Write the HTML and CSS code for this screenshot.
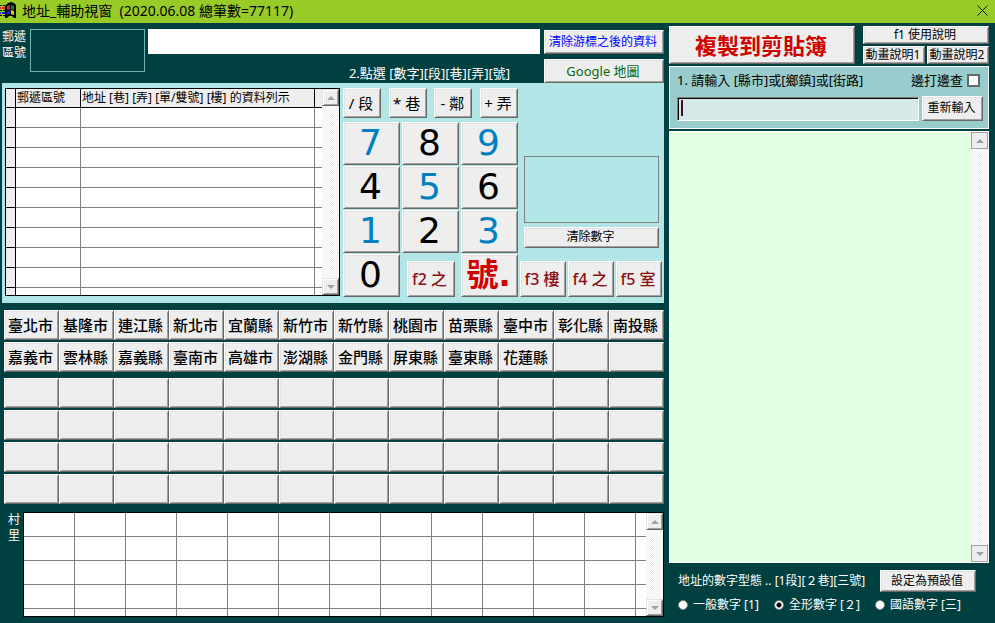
FILE: index.html
```html
<!DOCTYPE html>
<html lang="zh-Hant">
<head>
<meta charset="utf-8">
<title>地址_輔助視窗</title>
<link rel="stylesheet" href="styles.css">
</head>
<body>
<header class="titlebar">
  <svg class="app-icon" viewBox="0 0 17 17" width="17" height="17" aria-hidden="true">
    <path d="M0 3h2v1H0zM3 3h2v1H3zM0 8h2v1H0zM3 8h3v1H3zM0 13h2v1H0zM3 13h3v1H3z" fill="#000"/>
    <path d="M0 5h1v2H0zM2 5h3v2H2z" fill="#e02020"/>
    <path d="M0 10h1v2H0zM2 10h3v2H2z" fill="#1020d0"/>
    <path d="M6 3l2-2 3-1 3 1 2 2v13h-2l-2-2H9l-2 2H5V4z" fill="#000"/>
    <path d="M7 4l3-1v4L7 8z" fill="#e02020"/>
    <path d="M11 3l3 1v4l-3-1z" fill="#108030"/>
    <path d="M7 9l3-1v4l-3 1z" fill="#1020d0"/>
    <path d="M11 8l3 1v4l-3-1z" fill="#d8d020"/>
  </svg>
  <h1 class="title">地址_輔助視窗&nbsp; (2020.06.08 總筆數=77117)</h1>
  <button class="close" aria-label="關閉"><svg viewBox="0 0 11 11" width="11" height="11"><path d="M.5.5l10 10M10.500.5l-10 10" stroke="#111" fill="none"/></svg></button>
</header>
<main class="layout">
  <div class="left">
    <section class="top">
      <label class="zip-label" for="zip">郵遞<br>區號</label>
      <input class="zip" id="zip">
      <div class="address-col">
        <input class="address" aria-label="地址">
        <p class="hint">2.點選 [數字][段][巷][弄][號]</p>
      </div>
      <div class="top-buttons">
        <button class="btn blue">清除游標之後的資料</button>
        <button class="btn green">Google 地圖</button>
      </div>
    </section>
    <section class="panel">
      <div class="grid-box">
        <div class="clip">
        <table class="list">
          <colgroup><col class="c-mark"><col class="c-zip"><col><col class="c-end"></colgroup>
          <thead><tr><th></th><th>郵遞區號</th><th>地址 [巷] [弄] [單/雙號] [樓] 的資料列示</th><th></th></tr></thead>
          <tbody>
            <tr><td></td><td></td><td></td><td></td></tr><tr><td></td><td></td><td></td><td></td></tr>
            <tr><td></td><td></td><td></td><td></td></tr><tr><td></td><td></td><td></td><td></td></tr>
            <tr><td></td><td></td><td></td><td></td></tr><tr><td></td><td></td><td></td><td></td></tr>
            <tr><td></td><td></td><td></td><td></td></tr><tr><td></td><td></td><td></td><td></td></tr>
            <tr><td></td><td></td><td></td><td></td></tr><tr><td></td><td></td><td></td><td></td></tr>
          </tbody>
        </table>
        </div>
        <div class="scroll"><button class="arrow up" aria-label="上"></button><button class="arrow down" aria-label="下"></button></div>
      </div>
      <div class="keypad">
        <div class="ops"><button class="btn">/ 段</button><button class="btn">* 巷</button><button class="btn">- 鄰</button><button class="btn">+ 弄</button></div>
        <div class="keys">
          <button class="btn alt">7</button><button class="btn">8</button><button class="btn alt">9</button>
          <button class="btn">4</button><button class="btn alt">5</button><button class="btn">6</button>
          <button class="btn alt">1</button><button class="btn">2</button><button class="btn alt">3</button>
          <button class="btn">0</button><button class="btn fn f2">f2 之</button><button class="btn hao">號.</button>
        </div>
      </div>
      <div class="side">
        <output class="number"></output>
        <button class="btn clear">清除數字</button>
        <div class="fns"><button class="btn fn">f3 樓</button><button class="btn fn">f4 之</button><button class="btn fn">f5 室</button></div>
      </div>
    </section>
    <section class="cities">
      <button class="btn">臺北市</button><button class="btn">基隆市</button><button class="btn">連江縣</button><button class="btn">新北市</button><button class="btn">宜蘭縣</button><button class="btn">新竹市</button><button class="btn">新竹縣</button><button class="btn">桃園市</button><button class="btn">苗栗縣</button><button class="btn">臺中市</button><button class="btn">彰化縣</button><button class="btn">南投縣</button>
      <button class="btn">嘉義市</button><button class="btn">雲林縣</button><button class="btn">嘉義縣</button><button class="btn">臺南市</button><button class="btn">高雄市</button><button class="btn">澎湖縣</button><button class="btn">金門縣</button><button class="btn">屏東縣</button><button class="btn">臺東縣</button><button class="btn">花蓮縣</button><button class="btn"></button><button class="btn"></button>
    </section>
    <section class="cities towns">
      <button class="btn"></button><button class="btn"></button><button class="btn"></button><button class="btn"></button><button class="btn"></button><button class="btn"></button><button class="btn"></button><button class="btn"></button><button class="btn"></button><button class="btn"></button><button class="btn"></button><button class="btn"></button>
      <button class="btn"></button><button class="btn"></button><button class="btn"></button><button class="btn"></button><button class="btn"></button><button class="btn"></button><button class="btn"></button><button class="btn"></button><button class="btn"></button><button class="btn"></button><button class="btn"></button><button class="btn"></button>
      <button class="btn"></button><button class="btn"></button><button class="btn"></button><button class="btn"></button><button class="btn"></button><button class="btn"></button><button class="btn"></button><button class="btn"></button><button class="btn"></button><button class="btn"></button><button class="btn"></button><button class="btn"></button>
      <button class="btn"></button><button class="btn"></button><button class="btn"></button><button class="btn"></button><button class="btn"></button><button class="btn"></button><button class="btn"></button><button class="btn"></button><button class="btn"></button><button class="btn"></button><button class="btn"></button><button class="btn"></button>
    </section>
    <section class="village">
      <div class="village-label">村<br>里</div>
      <div class="grid-box">
        <div class="clip">
        <table class="cells" aria-label="村里">
          <tr><td></td><td></td><td></td><td></td><td></td><td></td><td></td><td></td><td></td><td></td><td></td><td></td><td class="rest"></td></tr>
          <tr><td></td><td></td><td></td><td></td><td></td><td></td><td></td><td></td><td></td><td></td><td></td><td></td><td></td></tr>
          <tr><td></td><td></td><td></td><td></td><td></td><td></td><td></td><td></td><td></td><td></td><td></td><td></td><td></td></tr>
          <tr><td></td><td></td><td></td><td></td><td></td><td></td><td></td><td></td><td></td><td></td><td></td><td></td><td></td></tr>
          <tr><td></td><td></td><td></td><td></td><td></td><td></td><td></td><td></td><td></td><td></td><td></td><td></td><td></td></tr>
        </table>
        </div>
        <div class="scroll"><button class="arrow up" aria-label="上"></button><button class="arrow down" aria-label="下"></button></div>
      </div>
    </section>
  </div>
  <div class="right">
    <section class="actions">
      <button class="btn copy">複製到剪貼簿</button>
      <div class="helps"><button class="btn wide">f1 使用說明</button><button class="btn">動畫說明1</button><button class="btn">動畫說明2</button></div>
    </section>
    <section class="search">
      <div class="row"><label for="query">1. 請輸入 [縣市]或[鄉鎮]或[街路]</label><label class="check">邊打邊查<input type="checkbox"></label></div>
      <div class="row"><input class="query" id="query"><button class="btn">重新輸入</button></div>
    </section>
    <section class="results">
      <div class="result-body"></div>
      <div class="scroll"><button class="arrow flat up" aria-label="上"></button><button class="arrow flat down" aria-label="下"></button></div>
    </section>
    <footer class="settings">
      <div class="row"><span>地址的數字型態 .. [1段][２巷][三號]</span><button class="btn">設定為預設值</button></div>
      <div class="radios">
        <label><input type="radio" name="style">一般數字 [1]</label>
        <label><input type="radio" name="style" checked>全形數字 [２]</label>
        <label><input type="radio" name="style">國語數字 [三]</label>
      </div>
    </footer>
  </div>
</main>
</body>
</html>
```
FILE: styles.css
```css
* { box-sizing: border-box; }
body {
  margin: 0;
  min-height: 100vh;
  display: flex;
  flex-direction: column;
  background: #004040;
  font: 12px/16px "Noto Sans", "Noto Sans CJK TC", sans-serif;
  color: #000;
}
button, input { font: inherit; color: inherit; margin: 0; padding: 0; border-radius: 0; }
p, h1 { margin: 0; }

.titlebar { display: flex; align-items: center; height: 23px; background: #98cb28; padding: 0 7px 2px 0; }
.app-icon { flex: none; }
.title { flex: 1; margin-left: 5px; font-size: 14px; line-height: 20px; font-weight: 400; }
.close { display: flex; border: 0; background: none; }

.layout { flex: 1; display: grid; grid-template-columns: minmax(0, 1fr) 320px; column-gap: 5px; padding: 0 6px 0 2px; }
.left, .right { display: flex; flex-direction: column; min-width: 0; }

.btn {
  background: #eee;
  border: 1px solid;
  border-color: #fff #696969 #696969 #fff;
  box-shadow: inset 1px 1px #e3e3e3, inset -1px -1px #a0a0a0;
  padding: 0 2px 1px 0;
  text-align: center;
  white-space: nowrap;
  min-width: 0;
}

.top { display: flex; height: 60px; padding-top: 6px; }
.zip-label { width: 28px; color: #fff; }
.zip { width: 115px; height: 43px; border: 1px solid #6fb3b3; background: none; color: #fff; }
.address-col { flex: 1; min-width: 0; margin: 0 4px 0 3px; display: flex; flex-direction: column; }
.address { height: 25px; border: 0; background: #fff; }
.hint { color: #fff; font-size: 13px; margin: 11px 30px 0 0; text-align: right; }
.top-buttons { width: 120px; display: flex; flex-direction: column; gap: 5px; padding-top: 1px; }
.top-buttons .btn { height: 24px; }
.blue { color: #00f; }
.top-buttons .green { color: #0a6a0a; font-size: 13px; }

.panel { display: flex; height: 220px; background: #b2e6e6; padding: 5px 2px 6px 3px; }
.grid-box { display: flex; border: 1px solid #000; background: #fff; flex: 1; min-width: 0; }
.clip { flex: 1; min-width: 0; overflow: hidden; }
.panel .grid-box { height: 208px; }
.list { width: 100%; border-collapse: separate; border-spacing: 0; table-layout: fixed; }
.c-mark { width: 10px; }
.c-zip { width: 65px; }
.c-end { width: 7px; }
.list th { height: 19px; padding: 0 0 0 1px; background: #eee; border-right: 1px solid #000; border-bottom: 1px solid #000; font-weight: 400; line-height: 16px; text-align: left; white-space: nowrap; overflow: hidden; }
.list td { height: 20px; padding: 0; border-right: 1px solid #808080; border-bottom: 1px solid #808080; }
.list td:first-child { background: #eee; border-color: #000; }
.list th:last-child, .list td:last-child { border-right: 0; }
.scroll {
  width: 17px;
  flex: none;
  display: flex;
  flex-direction: column;
  justify-content: space-between;
  background: repeating-conic-gradient(#fff 0 25%, #eee 0 50%) 0 0 / 2px 2px;
}
.arrow {
  height: 17px;
  display: grid;
  place-items: center;
  background: #eee;
  border: 1px solid;
  border-color: #e3e3e3 #696969 #696969 #e3e3e3;
  box-shadow: inset 1px 1px #fff, inset -1px -1px #a0a0a0;
}
.arrow::before { content: ""; border: 4px solid transparent; }
.up::before { border-top: 0; border-bottom-color: #a0a0a0; }
.down::before { border-bottom: 0; border-top-color: #a0a0a0; }
.flat { border-color: #a0a0a0; box-shadow: none; }

.keypad { width: 175px; margin-left: 3px; display: flex; flex-direction: column; gap: 4px; }
.ops { display: flex; justify-content: space-between; }
.ops .btn { width: 38px; height: 30px; font-size: 15px; line-height: 20px; }
.keys { display: grid; grid-template-columns: repeat(3, 1fr); gap: 1px 2px; }
.keys .btn { height: 43px; font-family: "DejaVu Sans", "Noto Sans CJK TC", sans-serif; font-size: 36px; line-height: 40px; }
.keys .alt { color: #0080c0; }
.btn.fn { height: 36px; color: #8b1010; font-size: 16px; line-height: 20px; font-weight: 500; }
.keys .f2 { width: 48px; height: 36px; font-family: inherit; font-size: 16px; line-height: 20px; align-self: end; justify-self: center; }
.keys .hao { color: #d00000; font-size: 32px; font-weight: 700; }
.side { width: 142px; margin-left: 2px; display: flex; flex-direction: column; justify-content: flex-end; }
.number { height: 67px; margin: 0 3px 4px 4px; border: 1px solid #808080; }
.clear { height: 21px; margin: 0 3px 13px 4px; line-height: 16px; }
.fns { display: flex; gap: 2px; }
.fns .btn { flex: 1; }

.cities { display: grid; grid-template-columns: repeat(12, 1fr); grid-auto-rows: 30px; row-gap: 2px; margin: 7px 0 0 2px; font-size: 15px; line-height: 20px; font-weight: 500; }
.towns { margin-top: 6px; }

.village { display: flex; flex: 1; padding: 8px 0 6px 0; }
.village-label { width: 21px; padding-left: 6px; color: #fff; }
.village .grid-box { height: 105px; }
.village .clip { height: 103px; }
.cells { width: 100%; border-collapse: separate; border-spacing: 0; table-layout: fixed; }
.cells td { height: 24px; padding: 0; border-right: 1px solid #808080; border-bottom: 1px solid #808080; }
.cells .rest { width: 10px; }
.cells td:last-child { border-right: 0; }

.actions { display: flex; gap: 8px; padding: 3px 0 2px; }
.copy { flex: 1; color: #d00000; font-size: 22px; line-height: 30px; font-weight: 700; }
.helps { width: 126px; display: grid; grid-template-columns: 1fr 1fr; gap: 2px; }
.helps .btn { height: 18px; line-height: 16px; }
.helps .wide { grid-column: span 2; }
.search { height: 63px; border: 1px solid #fff; background: #99cccc; padding: 5px 5px 7px 7px; display: flex; flex-direction: column; justify-content: space-between; }
.row { display: flex; align-items: center; justify-content: space-between; }
.search .row { gap: 3px; }
.search label { font-size: 13px; }
.check { display: flex; align-items: center; gap: 4px; margin-right: 3px; }
.check input { appearance: none; width: 13px; height: 13px; border: 2px solid #696969; background: #fff; }
.query {
  flex: 1;
  min-width: 0;
  height: 24px;
  background: linear-gradient(#401018, #401018) 3px 2px / 2px 16px no-repeat #d6e9e8;
  border: 1px solid;
  border-color: #808080 #fff #fff #808080;
  box-shadow: inset 1px 1px #000;
  padding-left: 3px;
}
.search .btn { width: 61px; height: 25px; }
.results { flex: 1; display: flex; margin-top: 2px; min-height: 432px; border: 1px solid #fff; background: #e3ffe3; }
.result-body { flex: 1; }
.settings { height: 60px; padding: 7px 13px 0 9px; color: #fff; }
.settings .btn { width: 96px; height: 22px; color: #000; }
.radios { display: flex; gap: 15px; margin: 5px 0 0; white-space: nowrap; }
.radios label { display: flex; align-items: center; gap: 5px; }
.radios input { appearance: none; width: 10px; height: 10px; border: 1px solid #808080; border-radius: 50%; background: #fff; }
.radios input:checked { background: radial-gradient(circle, #000 2px, #fff 3px); }
```
